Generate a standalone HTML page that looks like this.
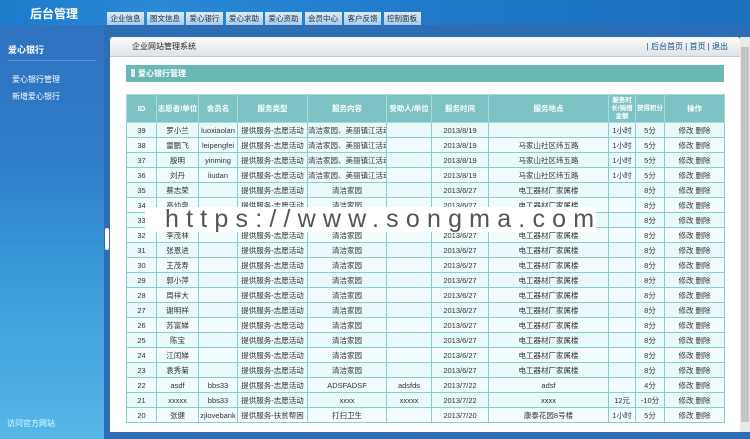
<!DOCTYPE html>
<html><head><meta charset="utf-8"><style>
*{margin:0;padding:0;box-sizing:border-box}
body{width:750px;height:439px;overflow:hidden;position:relative;font-family:"Liberation Sans","Noto Sans CJK SC",sans-serif;background:#2d6db5}
.top{position:absolute;left:0;top:0;width:750px;height:25px;background:linear-gradient(90deg,#1c7acb,#2a8ad6 20%,#1f78c8 60%,#1d6fbf);}
.logo{position:absolute;left:30px;top:5px;color:#fff;font-size:12px;font-weight:bold}
.tabs{position:absolute;left:107px;top:12px;display:flex}
.tabs span{display:block;width:37px;height:13px;margin-right:2.5px;background:linear-gradient(#dcebf7,#a9cbe8);color:#234;font-size:7.5px;line-height:13px;text-align:center}
.side{position:absolute;left:0;top:25px;width:104px;height:414px;background:linear-gradient(#2f72c0 0%,#2f7cc8 30%,#3a9ad8 60%,#58b6e8 100%)}
.side h3{position:absolute;left:8px;top:18px;color:#fff;font-size:9px;width:88px;border-bottom:1px solid #5a8fd0;padding-bottom:4px}
.side .a{position:absolute;left:12px;color:#fff;font-size:8px}
.strip{position:absolute;left:104px;top:25px;width:6px;height:414px;background:#2d6db5}
.handle{position:absolute;left:105px;top:228px;width:4px;height:22px;background:#fff;border-radius:2px}
.panel{position:absolute;left:110px;top:37px;width:630px;height:395px;background:#fff;border-radius:3px 3px 0 0}
.ph{height:20px;background:linear-gradient(#fafafa,#dfe4e8);border-bottom:1px solid #c8d0d6;font-size:8px;line-height:20px;padding-left:22px;color:#222;border-radius:3px 3px 0 0}
.links{position:absolute;right:12px;top:0;font-size:8px;line-height:20px;color:#1a4f8a}
.tt{position:absolute;left:16px;top:28px;width:598px;height:17px;background:#6ab8b3;color:#fff;font-size:8px;font-weight:bold;line-height:17px;padding-left:12px}
.tt:before{content:"";position:absolute;left:5px;top:4px;width:4px;height:8px;background:#dbe8f8}
table{position:absolute;left:16px;top:57px;width:598px;border-collapse:collapse;font-size:7.5px;table-layout:fixed}
th{background:#7dc3c3;color:#fff;height:28px;border:1px solid #a8dcdc;font-weight:bold;line-height:9px;padding:0}
th.s{font-size:6.5px;line-height:8px}
td{height:15px;line-height:13px;border:1px solid #86cfcf;text-align:center;color:#333;background:#e9f9f9;white-space:nowrap;overflow:hidden;padding:0}
tr:nth-child(odd) td{background:#f2fcfc}
.scroll{position:absolute;left:740px;top:37px;width:10px;height:395px;background:#e8e8e8}
.scroll div{position:absolute;left:1px;top:10px;width:8px;height:375px;background:#c4c4c4}
.bot{position:absolute;left:110px;top:432px;width:640px;height:7px;background:#2d6db5}
.wm{position:absolute;left:145px;top:207px;width:451px;height:25px;background:#fff;color:#555;font-size:25px;line-height:25px;letter-spacing:7.2px;padding-left:20px;white-space:nowrap}
.foot{position:absolute;left:7px;top:418px;font-size:8px;color:#dff}
</style></head><body>
<div class="top"><div class="logo">后台管理</div>
<div class="tabs"><span>企业信息</span><span>图文信息</span><span>爱心银行</span><span>爱心求助</span><span>爱心资助</span><span>会员中心</span><span>客户反馈</span><span>控制面板</span></div></div>
<div class="side"><h3>爱心银行</h3><div class="a" style="top:49px">爱心银行管理</div><div class="a" style="top:66px">新增爱心银行</div></div>
<div class="foot">访问官方网站</div>
<div class="strip"></div><div class="handle"></div>
<div class="panel">
<div class="ph">企业网站管理系统</div>
<div class="links">| 后台首页 | 首页 | 退出</div>
<div class="tt">爱心银行管理</div>
<table>
<colgroup><col style="width:30px"><col style="width:42px"><col style="width:39px"><col style="width:70px"><col style="width:79px"><col style="width:45px"><col style="width:57px"><col style="width:120px"><col style="width:27px"><col style="width:29px"><col style="width:60px"></colgroup>
<tr><th>ID</th><th>志愿者/单位</th><th>会员名</th><th>服务类型</th><th>服务内容</th><th>受助人/单位</th><th>服务时间</th><th>服务地点</th><th class="s">服务时长/捐赠金额</th><th class="s">获得积分</th><th>操作</th></tr>
<tr><td>39</td><td>罗小兰</td><td>luoxiaolan</td><td>提供服务-志愿活动</td><td>清洁家园、美丽镇江活动</td><td></td><td>2013/8/19</td><td></td><td>1小时</td><td>5分</td><td>修改 删除</td></tr>
<tr><td>38</td><td>雷鹏飞</td><td>leipengfei</td><td>提供服务-志愿活动</td><td>清洁家园、美丽镇江活动</td><td></td><td>2013/8/19</td><td>马家山社区纬五路</td><td>1小时</td><td>5分</td><td>修改 删除</td></tr>
<tr><td>37</td><td>殷明</td><td>yinming</td><td>提供服务-志愿活动</td><td>清洁家园、美丽镇江活动</td><td></td><td>2013/8/19</td><td>马家山社区纬五路</td><td>1小时</td><td>5分</td><td>修改 删除</td></tr>
<tr><td>36</td><td>刘丹</td><td>liudan</td><td>提供服务-志愿活动</td><td>清洁家园、美丽镇江活动</td><td></td><td>2013/8/19</td><td>马家山社区纬五路</td><td>1小时</td><td>5分</td><td>修改 删除</td></tr>
<tr><td>35</td><td>蔡志荣</td><td></td><td>提供服务-志愿活动</td><td>清洁家园</td><td></td><td>2013/6/27</td><td>电工器材厂家属楼</td><td></td><td>8分</td><td>修改 删除</td></tr>
<tr><td>34</td><td>高幼泉</td><td></td><td>提供服务-志愿活动</td><td>清洁家园</td><td></td><td>2013/6/27</td><td>电工器材厂家属楼</td><td></td><td>8分</td><td>修改 删除</td></tr>
<tr><td>33</td><td>李建国</td><td></td><td>提供服务-志愿活动</td><td>清洁家园</td><td></td><td>2013/6/27</td><td>电工器材厂家属楼</td><td></td><td>8分</td><td>修改 删除</td></tr>
<tr><td>32</td><td>李茂林</td><td></td><td>提供服务-志愿活动</td><td>清洁家园</td><td></td><td>2013/6/27</td><td>电工器材厂家属楼</td><td></td><td>8分</td><td>修改 删除</td></tr>
<tr><td>31</td><td>张恩进</td><td></td><td>提供服务-志愿活动</td><td>清洁家园</td><td></td><td>2013/6/27</td><td>电工器材厂家属楼</td><td></td><td>8分</td><td>修改 删除</td></tr>
<tr><td>30</td><td>王茂寿</td><td></td><td>提供服务-志愿活动</td><td>清洁家园</td><td></td><td>2013/6/27</td><td>电工器材厂家属楼</td><td></td><td>8分</td><td>修改 删除</td></tr>
<tr><td>29</td><td>郭小萍</td><td></td><td>提供服务-志愿活动</td><td>清洁家园</td><td></td><td>2013/6/27</td><td>电工器材厂家属楼</td><td></td><td>8分</td><td>修改 删除</td></tr>
<tr><td>28</td><td>周祥大</td><td></td><td>提供服务-志愿活动</td><td>清洁家园</td><td></td><td>2013/6/27</td><td>电工器材厂家属楼</td><td></td><td>8分</td><td>修改 删除</td></tr>
<tr><td>27</td><td>谢明祥</td><td></td><td>提供服务-志愿活动</td><td>清洁家园</td><td></td><td>2013/6/27</td><td>电工器材厂家属楼</td><td></td><td>8分</td><td>修改 删除</td></tr>
<tr><td>26</td><td>苏富娣</td><td></td><td>提供服务-志愿活动</td><td>清洁家园</td><td></td><td>2013/6/27</td><td>电工器材厂家属楼</td><td></td><td>8分</td><td>修改 删除</td></tr>
<tr><td>25</td><td>陈宝</td><td></td><td>提供服务-志愿活动</td><td>清洁家园</td><td></td><td>2013/6/27</td><td>电工器材厂家属楼</td><td></td><td>8分</td><td>修改 删除</td></tr>
<tr><td>24</td><td>江闰娣</td><td></td><td>提供服务-志愿活动</td><td>清洁家园</td><td></td><td>2013/6/27</td><td>电工器材厂家属楼</td><td></td><td>8分</td><td>修改 删除</td></tr>
<tr><td>23</td><td>袁秀菊</td><td></td><td>提供服务-志愿活动</td><td>清洁家园</td><td></td><td>2013/6/27</td><td>电工器材厂家属楼</td><td></td><td>8分</td><td>修改 删除</td></tr>
<tr><td>22</td><td>asdf</td><td>bbs33</td><td>提供服务-志愿活动</td><td>ADSFADSF</td><td>adsfds</td><td>2013/7/22</td><td>adsf</td><td></td><td>4分</td><td>修改 删除</td></tr>
<tr><td>21</td><td>xxxxx</td><td>bbs33</td><td>提供服务-志愿活动</td><td>xxxx</td><td>xxxxx</td><td>2013/7/22</td><td>xxxx</td><td>12元</td><td>-10分</td><td>修改 删除</td></tr>
<tr><td>20</td><td>张健</td><td>zjlovebank</td><td>提供服务-扶贫帮困</td><td>打扫卫生</td><td></td><td>2013/7/20</td><td>康泰花园8号楼</td><td>1小时</td><td>5分</td><td>修改 删除</td></tr>
</table>
</div>
<div class="scroll"><div></div></div>
<div class="bot"></div>
<div class="wm">https://www.songma.com</div>
</body></html>
